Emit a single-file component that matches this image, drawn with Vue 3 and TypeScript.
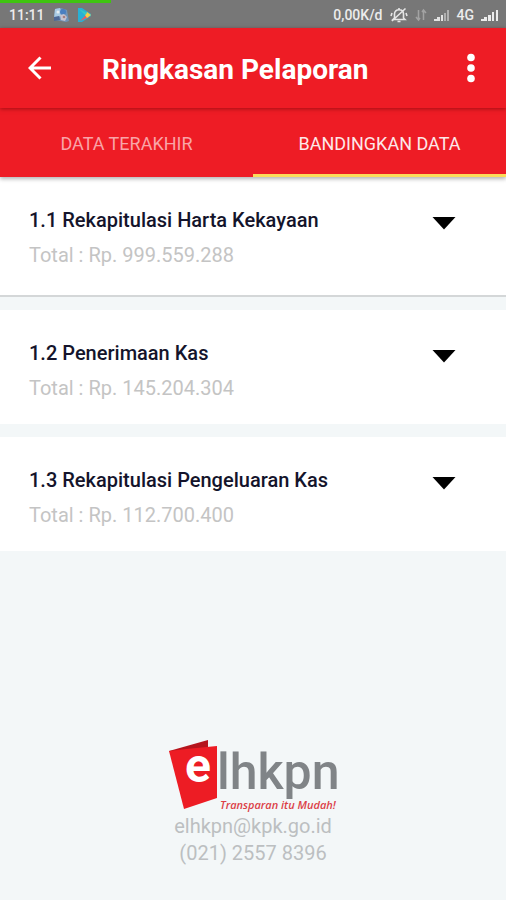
<script setup lang="ts">
import { ref } from 'vue'

interface Section {
  id: number
  title: string
  total: string
  raised: boolean
}

const tabs: string[] = ['DATA TERAKHIR', 'BANDINGKAN DATA']
const activeTab = ref(1)

const sections: Section[] = [
  { id: 1, title: '1.1 Rekapitulasi Harta Kekayaan', total: '999.559.288', raised: true },
  { id: 2, title: '1.2 Penerimaan Kas', total: '145.204.304', raised: false },
  { id: 3, title: '1.3 Rekapitulasi Pengeluaran Kas', total: '112.700.400', raised: false },
]
</script>

<template>
  <div class="screen">
    <div class="status">
      <div class="progress"></div>
      <div class="status-group">
        <span>11:11</span>
        <svg width="18" height="18" viewBox="0 0 18 18" aria-hidden="true">
          <path d="M3 3l6-1 6 2 1 6 1 5-3 1-5-1-7-1z" fill="#6f93b8" />
          <path d="M3 3l5-1 2 5-3 4-5 1z" fill="#a9cbe4" />
          <circle cx="11" cy="6" r="3" fill="#4a7fc0" />
          <path d="M8 9l4-1 3 3-2 4-4-1z" fill="#c6c3cf" />
          <path d="M2 11l5-1 1 4-6 1z" fill="#4d6997" />
          <circle cx="6" cy="6" r="1.5" fill="#e5edf2" />
          <circle cx="12" cy="11" r="1.3" fill="#a48080" />
        </svg>
        <svg width="16" height="16" viewBox="0 0 16 16" aria-hidden="true">
          <path d="M1 1h4l9 6v2l-9 6H1z" fill="#28b0d4" />
          <path d="M3 14l6-6 3 2z" fill="#e85c62" />
          <path d="M8 8l2-3 4 3-4 3z" fill="#f4cf45" />
          <path d="M2 2l6 6 2-2z" fill="#35c9c4" />
        </svg>
      </div>
      <div class="status-group">
        <span>0,00K/d</span>
        <svg width="18" height="16" viewBox="0 0 18 16" fill="none" stroke="#e6e6e6" stroke-width="1.6" aria-hidden="true">
          <path d="M4.500 11V7C4.500 4 6.500 2.800 9 2.800S13.500 4 13.500 7v4l1.500 1.500H3zM7.500 14.500h3M9 1v2M2 14L15.500 1.500M2 6l-1 3M16 6l1 3" />
        </svg>
        <svg width="12" height="14" viewBox="0 0 12 14" fill="none" stroke="#a3a3a3" stroke-width="1.500" aria-hidden="true">
          <path d="M3.500 2v9M1 9l2.500 3L5 10M8.500 12V3M7 4l1.500-2L11 5" />
        </svg>
        <svg width="16" height="14" viewBox="0 0 16 14" aria-hidden="true">
          <path d="M0 13v-2h3v2zM3 13V9h3v4zM7 13V7h2v6z" fill="#e3e3e3" />
          <path d="M10 13V5h2v8zM13 13V2h2v11z" fill="#b0b0b0" />
        </svg>
        <span>4G</span>
        <svg width="18" height="14" viewBox="0 0 18 14" aria-hidden="true">
          <path d="M0 13v-2h3v2zM3 13V9h3v4zM7 13V7h3v6zM11 13V4h2v9zM15 13V2h2v11z" fill="#ececec" />
        </svg>
      </div>
    </div>

    <header class="appbar">
      <button class="icon-button" type="button" aria-label="Kembali">
        <svg width="24" height="24" viewBox="0 0 24 24" fill="none" stroke="#fff" stroke-width="3" aria-hidden="true">
          <path d="M23 12H2.500M12.500 1.500L2 12l10.500 10.500" />
        </svg>
      </button>
      <h1>Ringkasan Pelaporan</h1>
      <button class="icon-button menu" type="button" aria-label="Menu">
        <svg width="8" height="30" viewBox="0 0 8 30" fill="#fff" aria-hidden="true">
          <circle cx="4" cy="4.500" r="3.800" />
          <circle cx="4" cy="15" r="3.800" />
          <circle cx="4" cy="25.500" r="3.800" />
        </svg>
      </button>
    </header>

    <nav class="tabs" role="tablist">
      <button
        v-for="(tab, index) in tabs"
        :key="tab"
        class="tab"
        :class="{ active: activeTab === index }"
        type="button"
        role="tab"
        :aria-selected="activeTab === index"
        @click="activeTab = index"
      >
        {{ tab }}
      </button>
    </nav>

    <main class="sections">
      <section v-for="section in sections" :key="section.id" class="card" :class="{ raised: section.raised }">
        <div>
          <h2>{{ section.title }}</h2>
          <p>Total : Rp. {{ section.total }}</p>
        </div>
        <button class="expand" type="button" :aria-label="section.title">
          <svg width="24" height="13" viewBox="0 0 24 13" aria-hidden="true">
            <path d="M0.500 0h23L12 12.500z" fill="#000" />
          </svg>
        </button>
      </section>
    </main>

    <footer class="footer">
      <svg class="logo" width="172" height="74" viewBox="0 0 172 74" role="img" aria-label="elhkpn Transparan itu Mudah!">
        <path d="M2 12L41 1v9L6 16z" fill="#b5151d" />
        <path d="M2 12l17-2 31-3v52L17 70z" fill="#ed1c24" />
        <text class="logo-e" x="18" y="43">e</text>
        <text class="logo-word" x="50" y="50">lhkpn</text>
        <text class="logo-tag" x="53" y="70">Transparan itu Mudah!</text>
      </svg>
      <a href="mailto:elhkpn@kpk.go.id">elhkpn@kpk.go.id</a>
      <a href="tel:02125578396">(021) 2557 8396</a>
    </footer>
  </div>
</template>

<style>
body {
  margin: 0;
  background: #f3f7f8;
}
</style>

<style scoped>
.screen {
  display: flex;
  flex-direction: column;
  min-height: 100vh;
  background: #f3f7f8;
  font-family: Roboto, 'Liberation Sans', sans-serif;
}

button {
  margin: 0;
  padding: 0;
  border: 0;
  background: none;
  font-family: inherit;
  cursor: pointer;
}

svg {
  display: block;
}

.status {
  position: relative;
  display: flex;
  justify-content: space-between;
  align-items: center;
  box-sizing: border-box;
  height: 28px;
  padding: 2px 7px 0 9px;
  background: #777;
  color: #ececec;
  font-size: 14px;
  font-weight: 500;
}

.progress {
  position: absolute;
  top: 0;
  left: 0;
  width: 22%;
  height: 3px;
  background: #3fc410;
}

.status-group {
  display: flex;
  align-items: center;
  gap: 7px;
}

.appbar {
  position: relative;
  z-index: 2;
  display: flex;
  align-items: center;
  height: 80px;
  padding: 0 20px;
  background: #ee1c25;
  box-shadow: 0 1px 4px rgba(90, 0, 0, 0.5);
  color: #fff;
}

.icon-button {
  display: flex;
  justify-content: center;
  width: 40px;
  padding: 8px 0;
}

.menu {
  width: 30px;
}

h1 {
  flex: 1;
  margin: 0;
  padding: 3px 0 0 42px;
  font-size: 28px;
  font-weight: 700;
  line-height: 32px;
}

.tabs {
  position: relative;
  z-index: 1;
  display: grid;
  grid-template-columns: 1fr 1fr;
  height: 69px;
  background: #ee1c25;
  box-shadow: 0 2px 4px rgba(0, 0, 0, 0.3);
}

.tab {
  padding-top: 4px;
  border-bottom: 3px solid transparent;
  color: #f9a4a8;
  font-size: 18px;
}

.tab.active {
  border-bottom-color: #fbdc5a;
  color: #fde8e9;
}

.sections {
  display: flex;
  flex-direction: column;
  gap: 13px;
}

.card {
  display: flex;
  justify-content: space-between;
  align-items: flex-start;
  padding: 26px 50px 18px 29px;
  background: #fff;
}

.card.raised {
  padding-bottom: 22px;
  border-bottom: 2px solid #d4d7d8;
}

h2,
p {
  margin: 0;
  font-size: 20px;
  line-height: 35px;
}

h2 {
  color: #14142b;
  font-weight: 500;
}

p {
  color: #c4c4c4;
}

.expand {
  padding: 14px 0;
}

.footer {
  display: flex;
  flex-direction: column;
  align-items: center;
  margin-top: auto;
  padding: 24px 0 33px;
}

.footer a {
  color: #bcbfc1;
  font-size: 20px;
  line-height: 27px;
  text-decoration: none;
}

.logo {
  overflow: visible;
}

.logo-e {
  fill: #fff;
  font-family: Roboto, sans-serif;
  font-size: 48px;
  font-weight: 700;
}

.logo-word {
  fill: #808487;
  font-family: Roboto, sans-serif;
  font-size: 50px;
  font-weight: 500;
}

.logo-tag {
  fill: #dc4047;
  font-family: 'Open Sans', sans-serif;
  font-size: 11px;
  font-style: italic;
  font-weight: 600;
}
</style>
